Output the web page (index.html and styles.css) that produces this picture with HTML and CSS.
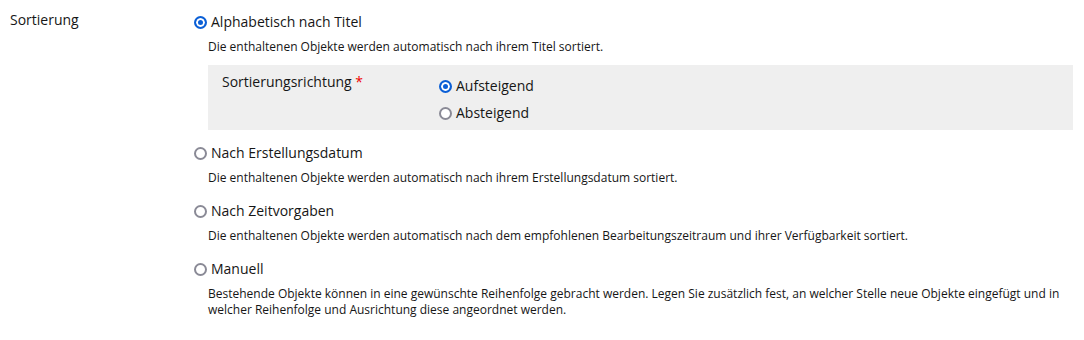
FILE: index.html
```html
<!DOCTYPE html>
<html>
<head>
    <title>Sortierung</title>
    <link rel="stylesheet" href="styles.css">
</head>
<body>
    <div class="form-row">
        <div class="form-label">Sortierung</div>
        <div class="form-input">
            <div class="option with-sub">
                <label class="radio-line">
                    <input type="radio" name="sorting" checked>
                    <span>Alphabetisch nach Titel</span>
                </label>
                <div class="help">Die enthaltenen Objekte werden automatisch nach ihrem Titel sortiert.</div>
                <div class="sub-form">
                    <div class="sub-label">Sortierungsrichtung <span class="required">*</span></div>
                    <div class="sub-input">
                        <label class="radio-line">
                            <input type="radio" name="direction" checked>
                            <span>Aufsteigend</span>
                        </label>
                        <label class="radio-line">
                            <input type="radio" name="direction">
                            <span>Absteigend</span>
                        </label>
                    </div>
                </div>
            </div>
            <div class="option">
                <label class="radio-line">
                    <input type="radio" name="sorting">
                    <span>Nach Erstellungsdatum</span>
                </label>
                <div class="help">Die enthaltenen Objekte werden automatisch nach ihrem Erstellungsdatum sortiert.</div>
            </div>
            <div class="option">
                <label class="radio-line">
                    <input type="radio" name="sorting">
                    <span>Nach Zeitvorgaben</span>
                </label>
                <div class="help">Die enthaltenen Objekte werden automatisch nach dem empfohlenen Bearbeitungszeitraum und ihrer Verfügbarkeit sortiert.</div>
            </div>
            <div class="option">
                <label class="radio-line">
                    <input type="radio" name="sorting">
                    <span>Manuell</span>
                </label>
                <div class="help">Bestehende Objekte können in eine gewünschte Reihenfolge gebracht werden. Legen Sie zusätzlich fest, an welcher Stelle neue Objekte eingefügt und in welcher Reihenfolge und Ausrichtung diese angeordnet werden.</div>
            </div>
        </div>
    </div>
</body>
</html>
```

FILE: styles.css
```css
body {
    font-family: "Open Sans", sans-serif;
    margin: 0;
    background-color: #fff;
    color: #161616;
    font-size: 14px;
}

.form-row {
    display: flex;
    padding: 10px 11px 0 10px;
}

.form-label {
    width: 183px;
    flex-shrink: 0;
    line-height: 20px;
}

.form-input {
    flex: 1;
    padding-top: 2px;
}

.option {
    margin-bottom: 15px;
}

.option.with-sub {
    margin-bottom: 13px;
}

.radio-line {
    display: flex;
    align-items: center;
    line-height: 20px;
    cursor: pointer;
}

.radio-line input {
    appearance: none;
    -webkit-appearance: none;
    width: 13px;
    height: 13px;
    margin: 0 4px 0 1px;
    border: 2px solid #8a8a96;
    border-radius: 50%;
    background-color: #fff;
    box-sizing: border-box;
    flex-shrink: 0;
}

.radio-line input:checked {
    border-color: #0b5fd6;
    background-color: #0b5fd6;
    box-shadow: inset 0 0 0 2px #fff;
}

.help {
    font-size: 12px;
    line-height: 16px;
    margin: 7px 0 0 15px;
}

.sub-form {
    display: flex;
    background-color: #efefef;
    margin: 10px 0 0 15px;
    padding: 7px 14px 7px;
}

.sub-label {
    width: 216px;
    flex-shrink: 0;
    line-height: 20px;
}

.required {
    color: #e00;
}

.sub-input {
    padding-top: 4px;
}

.sub-input .radio-line {
    margin-bottom: 7px;
}

.sub-input .radio-line:last-child {
    margin-bottom: 0;
}
```
